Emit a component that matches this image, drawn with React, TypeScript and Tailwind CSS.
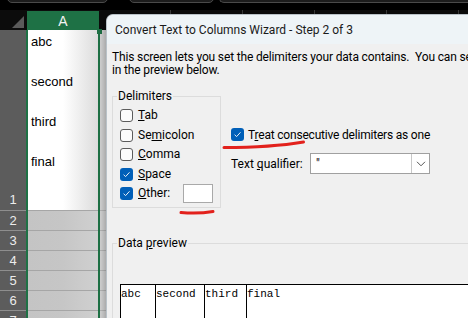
import React from 'react';

const ui = { fontFamily: 'Roboto, "Noto Sans", sans-serif' };
const cellFont = { fontFamily: '"Liberation Sans", Arial, sans-serif' };
const mono = { fontFamily: '"Liberation Mono", "Courier New", monospace' };

const CheckBox: React.FC<{ checked?: boolean }> = ({ checked }) =>
  checked ? (
    <span className="w-[13px] h-[13px] shrink-0 rounded-[3px] bg-[#005fb8] flex items-center justify-center">
      <svg width="9" height="9" viewBox="0 0 9 9">
        <path d="M1.6 4.7 L3.6 6.6 L7.5 2.3" stroke="#e8eef6" strokeWidth="1" fill="none" />
      </svg>
    </span>
  ) : (
    <span className="w-[13px] h-[13px] shrink-0 rounded-[3px] border border-[#5c5c5c] bg-[#fbfbfb]" />
  );

const DelimRow: React.FC<{ checked?: boolean; children: React.ReactNode; extra?: React.ReactNode }> = ({
  checked,
  children,
  extra,
}) => (
  <div className="h-[19.5px] flex items-center">
    <CheckBox checked={checked} />
    <span className="ml-[5px] leading-[13px]">{children}</span>
    {extra}
  </div>
);

const App: React.FC = () => {
  const extraCols = [0, 1, 2, 3, 4];
  const smallRows = ['2', '3', '4', '5', '6', '7'];

  return (
    <div className="relative w-[468px] h-[318px] overflow-hidden bg-black">
      {/* formula bar remains */}
      <div className="h-[10px] flex overflow-hidden">
        <div className="ml-[7px] w-[101px] h-[13px] -mt-[10px] rounded-b-[5px] border border-[#4a4a4a] bg-[#1c1c1c]" />
        <div className="ml-[21px] w-[85px] h-[13px] -mt-[10px] rounded-b-[5px] border border-[#4a4a4a] bg-[#1c1c1c]" />
        <div className="ml-[5px] flex-1 h-[13px] -mt-[10px] rounded-bl-[5px] border border-r-0 border-[#4a4a4a] bg-[#1c1c1c]" />
      </div>

      {/* column headers */}
      <div className="h-[20px] flex bg-[#0c0c0c]">
        <div className="w-[27px] flex items-end justify-end pr-[3px] pb-[2px]">
          <svg width="12" height="12" viewBox="0 0 12 12">
            <path d="M12 0 L12 12 L0 12 Z" fill="#5a5a5a" />
          </svg>
        </div>
        <div
          className="w-[72px] mt-[1px] bg-[#1e7145] text-[#f2f2f2] text-[14px] flex items-center justify-center leading-none"
          style={cellFont}
        >
          A
        </div>
        {extraCols.map((c) => (
          <div key={c} className="w-[72px] shrink-0 border-r border-[#3c3c3c]" />
        ))}
      </div>

      {/* sheet body */}
      <div className="flex flex-col" style={cellFont}>
        <div className="h-[180px] flex">
          <div className="w-[26px] bg-[#5c5c5c] text-[#ececec] text-[13px] flex items-end justify-center pb-[2px] leading-[16px]">
            1
          </div>
          <div className="w-[74px] border-x-2 border-[#1e7145] bg-gradient-to-r from-white via-white to-[#dcdcdc] text-[13px] text-black leading-[16px] pl-[3px] pt-[4px] flex flex-col gap-[24px]">
            <span>abc</span>
            <span>second</span>
            <span>third</span>
            <span>final</span>
          </div>
          <div className="flex-1 bg-[#d2d2d2]" />
        </div>
        {smallRows.map((r) => (
          <div key={r} className="h-[20px] flex">
            <div className="w-[26px] bg-[#5c5c5c] border-t border-[#8e8e8e] text-[#ececec] text-[13px] flex items-center justify-center">
              {r}
            </div>
            <div className="w-[74px] border-x-2 border-[#1e7145]">
              <div className="h-full border-t border-[#a6a6a6] bg-gradient-to-r from-[#c4c4c4] via-[#c6c6c6] to-[#d0d0d0]" />
            </div>
            <div className="flex-1 bg-[#d2d2d2] border-t border-[#b4b4b4]" />
          </div>
        ))}
      </div>

      {/* fill handle corner */}
      <div className="absolute left-[97px] top-[29px] w-[5px] h-[5px] bg-[#1e7145]" />

      {/* wizard dialog */}
      <div
        className="absolute left-[106px] top-[14px] w-[380px] h-[320px] rounded-tl-[7px] border-l border-t border-[#b9c2c8] bg-[#f0f0f0] overflow-hidden shadow-[-2px_0_6px_rgba(0,0,0,0.25)] text-[12px] text-black"
        style={ui}
      >
        <div className="h-[29px] bg-[#eef4f7] flex items-center pl-[8px] text-[#1a1a1a] whitespace-nowrap">
          Convert Text to Columns Wizard - Step 2 of 3
        </div>
        <div className="pl-[5px] pt-[7px]">
          <div className="leading-[13px] whitespace-nowrap tracking-[-0.15px]">
            <div>This screen lets you set the delimiters your data contains.&nbsp; You can see how your text is affected</div>
            <div>in the preview below.</div>
          </div>

          <div className="flex mt-[12px]">
            <fieldset className="w-[109px] border border-[#dcdcdc] pl-[7px] pt-[3.75px] pb-[3.75px]">
              <legend className="-ml-[3px] -mb-px px-[1px] leading-[14px]">Delimiters</legend>
              <DelimRow>
                <u>T</u>ab
              </DelimRow>
              <DelimRow>
                Se<u>m</u>icolon
              </DelimRow>
              <DelimRow>
                <u>C</u>omma
              </DelimRow>
              <DelimRow checked>
                <u>S</u>pace
              </DelimRow>
              <DelimRow
                checked
                extra={<div className="ml-auto mr-[7px] w-[30px] h-[19px] bg-white border border-[#a9a9a9]" />}
              >
                <u>O</u>ther:
              </DelimRow>
            </fieldset>

            <div className="ml-[10px] pt-[39px] flex flex-col">
              <div className="h-[13px] flex items-center whitespace-nowrap">
                <CheckBox checked />
                <span className="ml-[4px] tracking-[-0.2px]">
                  T<u>r</u>eat consecutive delimiters as one
                </span>
              </div>
              <div className="mt-[12px] flex items-center">
                <span className="w-[79px] whitespace-nowrap">
                  Text <u>q</u>ualifier:
                </span>
                <div className="w-[120px] h-[21px] bg-white border border-[#a0a0a0] flex">
                  <div className="flex-1 pl-[5px] pt-[4px] leading-[12px]">"</div>
                  <div className="w-[18px] border-l border-[#c8c8c8] flex items-center justify-center">
                    <svg width="10" height="6" viewBox="0 0 10 6">
                      <path d="M1 0.8 L5 4.8 L9 0.8" stroke="#555" strokeWidth="1" fill="none" />
                    </svg>
                  </div>
                </div>
              </div>
            </div>
          </div>

          <fieldset className="mt-[28px] h-[120px] border border-r-0 border-b-0 border-[#dcdcdc] pl-[7px] pt-[34px]">
            <legend className="-ml-[3px] px-[1px] leading-[14px]">
              Data <u>p</u>review
            </legend>
            <div className="flex h-[60px] bg-white border border-black text-[11px] leading-[13px]" style={mono}>
              <div className="w-[35px] border-r border-black pt-[3px]">abc</div>
              <div className="w-[49px] border-r border-black pt-[3px]">second</div>
              <div className="w-[42px] border-r border-black pt-[3px]">third</div>
              <div className="flex-1 pt-[3px]">final</div>
            </div>
          </fieldset>
        </div>
      </div>

      {/* red hand-drawn marks */}
      <svg className="absolute left-0 top-0 pointer-events-none" width="468" height="318">
        <path d="M224 147.5 C252 147.5 283 145.5 303.5 142" stroke="#e2211c" strokeWidth="3" fill="none" strokeLinecap="round" />
        <path d="M181 212.5 C193 213.5 204 213 213 211.5" stroke="#e2211c" strokeWidth="3" fill="none" strokeLinecap="round" />
      </svg>
    </div>
  );
};

export default App;
